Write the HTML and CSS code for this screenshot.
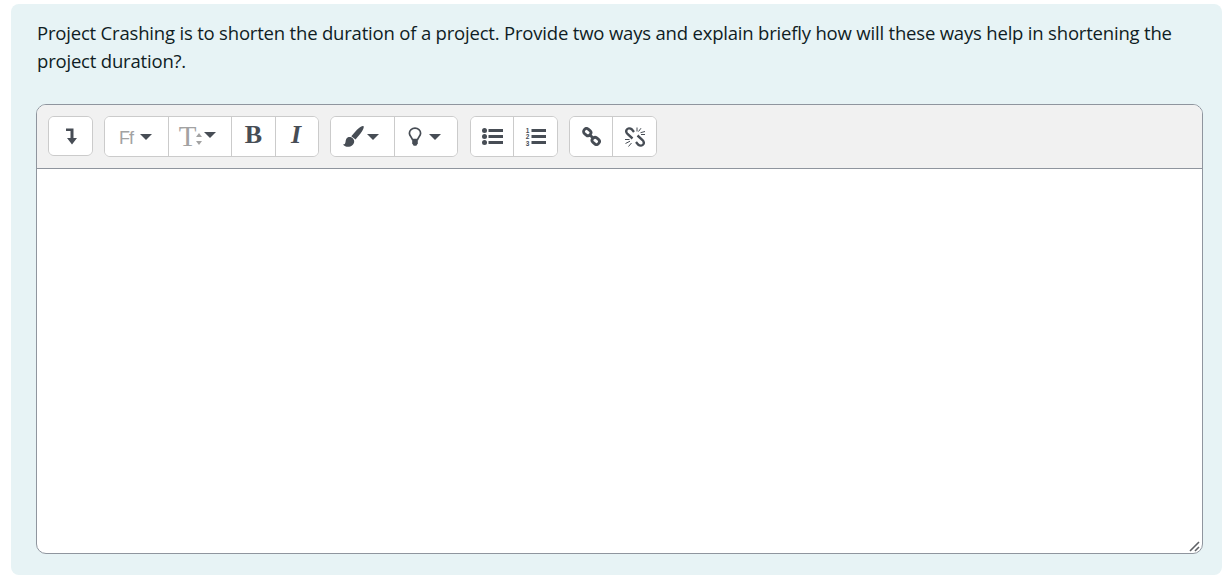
FILE: index.html
```html
<!DOCTYPE html>
<html lang="en">
<head>
<meta charset="utf-8">
<title>Question</title>
<link rel="stylesheet" href="styles.css">
</head>
<body>
<main class="card">
  <p class="question">Project Crashing is to shorten the duration of a project. Provide two ways and explain briefly how will these ways help in shortening the project duration?.</p>
  <section class="editor">
    <div class="toolbar">
      <div class="group group-short">
        <button class="btn w-toggle"><svg width="12" height="18" viewBox="0 0 12 18"><path d="M1 1.500h7.500v9.500H12l-5 6.500-5-6.500h3.500V4H1z" fill="#474d55"/></svg></button>
      </div>
      <div class="group">
        <button class="btn w-font"><span class="ff">Ff</span><i class="caret"></i></button>
        <button class="btn w-size"><span class="tt">T</span><svg class="updown" width="6" height="14" viewBox="0 0 6 14"><path d="M3 1l3 4H0zM3 13L0 9h6z" fill="#a2a2a2"/></svg><i class="caret caret-tight"></i></button>
        <button class="btn w-b"><span class="bold">B</span></button>
        <button class="btn w-i"><span class="ital">I</span></button>
      </div>
      <div class="group">
        <button class="btn w-brush"><svg width="21" height="21" viewBox="0 0 21 21"><path d="M20.500 .2c.8.800-.5 4-3 7.300L12.500 13.500 8.300 10.200 14 3.800C16.500 1.300 19.800-.5 20.500 .2z" fill="#474d55"/><path d="M5.500 11c2.800-.6 5.700 1.500 5.700 4.200 0 3.300-3 5.600-6.200 5.600-1.900 0-3.800-.7-5-2.300 1.700 0 2.300-.8 2.500-2.500C2.800 13.500 3.500 11.500 5.500 11z" fill="#474d55"/></svg><i class="caret"></i></button>
        <button class="btn w-bulb"><svg width="14" height="19" viewBox="0 0 14 19"><path d="M7 1.200c3.100 0 5.600 2.200 5.600 5 0 2.700-2.300 3.700-3 6.300H4.400c-.7-2.600-3-3.600-3-6.300 0-2.800 2.500-5 5.600-5z" fill="none" stroke="#474d55" stroke-width="1.700"/><path d="M4.200 13h5.600v3.500L8.300 18.800H5.700L4.200 16.500z" fill="#474d55"/></svg><i class="caret caret-wide"></i></button>
      </div>
      <div class="group group-lists">
        <button class="btn w-list"><svg width="21" height="17" viewBox="0 0 21 17"><g fill="#474d55"><circle cx="2.500" cy="2.500" r="2.500"/><circle cx="2.500" cy="8.500" r="2.500"/><circle cx="2.500" cy="14.500" r="2.500"/><rect x="6.500" y="1" width="14.500" height="3"/><rect x="6.500" y="7" width="14.500" height="3"/><rect x="6.500" y="13" width="14.500" height="3"/></g></svg></button>
        <button class="btn w-olist"><svg width="21" height="23" viewBox="0 0 21 23"><g fill="#474d55"><rect x="6.500" y="4" width="14.500" height="3"/><rect x="6.500" y="10" width="14.500" height="3"/><rect x="6.500" y="16" width="14.500" height="3"/><text class="olnum" x="2.500" y="7.500">1</text><text class="olnum" x="2.500" y="14">2</text><text class="olnum" x="2.500" y="20.500">3</text></g></svg></button>
      </div>
      <div class="group">
        <button class="btn w-link"><svg width="19" height="19" viewBox="0 0 19 19"><g fill="none" stroke="#474d55" stroke-width="2.800"><rect x="1.500" y="2.200" width="7.500" height="5.800" rx="2.600" transform="rotate(40 5.250 5.100)"/><rect x="10" y="11" width="7.500" height="5.800" rx="2.600" transform="rotate(40 13.750 13.900)"/><path d="M8 8l3 3"/></g></svg></button>
        <button class="btn w-unlink"><svg width="20" height="20" viewBox="0 0 20 20"><g fill="none" stroke="#474d55" stroke-width="2.400"><path d="M9 5L7 2.500C5 .8 2.500 1 1.500 3c-.7 1.500 0 3 1 4l5 4.500"/><path d="M11 15l2 2.500c2 1.700 4.500 1.500 5.500-.5.700-1.500 0-3-1-4l-5-4.500"/></g><path d="M12 .5v4M16 1.200L13.500 4.500M20 4.500l-4.500 1.200M20 7.500h-4M0 12.500h4.500M.5 16.500l4.500-2.300M3.500 19.500l3-3.500" stroke="#474d55" stroke-width="1" fill="none"/></svg></button>
      </div>
    </div>
    <div class="content">
      <svg class="grip" width="12" height="12" viewBox="0 0 12 12"><path d="M1 10L10 1M6 10l4-4" stroke="#5f6266" stroke-width="1.600" fill="none"/></svg>
    </div>
  </section>
</main>
</body>
</html>
```
FILE: styles.css
```css
* { box-sizing: border-box; }
html, body { margin: 0; height: 100%; background: #fff; overflow: hidden; }
body { padding: 4px 0 6px 11px; }
.card {
  height: 571px;
  padding: 15px 19px 20px 25px;
  background: #e7f3f5;
  border-radius: 8px;
  font-family: "Open Sans", "Noto Sans", sans-serif;
}
.question {
  margin: 0 0 29px 1px;
  font-size: 18.500px;
  line-height: 28px;
  letter-spacing: -0.190px;
  color: #0f1d24;
}
.editor {
  height: 450px;
  display: flex;
  flex-direction: column;
  border: 1px solid #8f959e;
  border-radius: 10px;
  overflow: hidden;
  background: #fff;
}
.toolbar {
  height: 64px;
  flex: none;
  padding: 11px 0 0 11px;
  display: flex;
  align-items: flex-start;
  gap: 11px;
  background: #f1f1f1;
  border-bottom: 1px solid #8f959e;
}
.group {
  height: 41px;
  display: flex;
  background: #fff;
  border: 1px solid #cbcbcb;
  border-radius: 6px;
  overflow: hidden;
}
.group-short { height: 40px; }
.group-lists { margin-left: 1px; }
.btn {
  display: flex;
  align-items: center;
  justify-content: center;
  height: 100%;
  padding: 0;
  border: 0;
  border-right: 1px solid #cbcbcb;
  background: #fff;
  font-family: "Liberation Serif", serif;
  color: #474d55;
}
.btn:last-child { border-right: 0; }
.w-toggle { width: 43px; }
.w-font { width: 64px; gap: 7px; padding-right: 2px; }
.w-size { width: 63px; padding-right: 5px; }
.w-b { width: 44px; }
.w-i { width: 42px; padding-right: 2px; }
.w-brush { width: 64px; gap: 3px; padding-right: 4px; }
.w-bulb { width: 62px; gap: 7px; padding-right: 3px; }
.w-list { width: 43px; }
.w-olist { width: 43px; }
.w-link { width: 43px; }
.w-unlink { width: 43px; }
.ff {
  font-family: "Liberation Sans", sans-serif;
  font-size: 18px;
  letter-spacing: -1px;
  color: #a2a2a2;
  position: relative;
  top: 2px;
}
.tt { font-size: 29px; color: #a2a2a2; line-height: 1; }
.updown { margin: 4px 2px 0 0; }
.bold { font-size: 26px; font-weight: bold; line-height: 1; position: relative; top: -2px; }
.ital { font-size: 26px; font-weight: bold; font-style: italic; line-height: 1; position: relative; top: -2px; }
.caret {
  width: 0;
  height: 0;
  border-left: 6px solid transparent;
  border-right: 6px solid transparent;
  border-top: 6px solid #474d55;
}
.caret-tight { margin-top: -3px; }
.olnum {
  font-family: "Liberation Sans", sans-serif;
  font-size: 6.500px;
  font-weight: bold;
  text-anchor: middle;
}
.content { flex: 1; position: relative; }
.grip { position: absolute; right: 1px; bottom: 0; }
```
